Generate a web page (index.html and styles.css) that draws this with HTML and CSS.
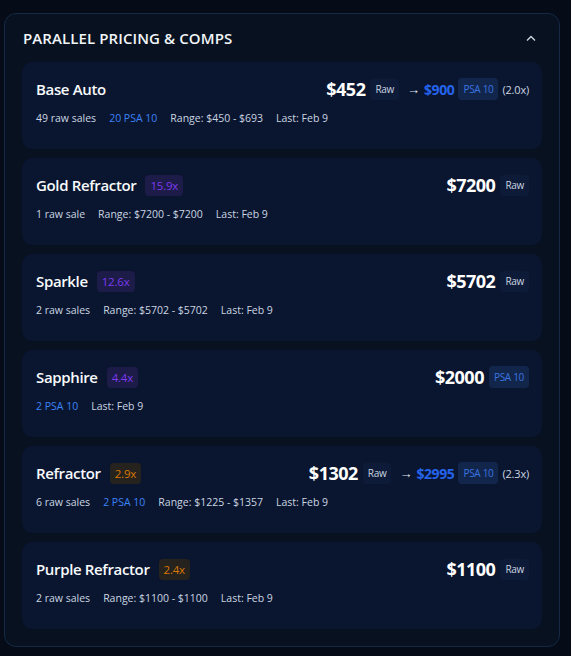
FILE: index.html
```html
<!DOCTYPE html>
<html lang="en">
<head>
  <meta charset="UTF-8" />
  <meta name="viewport" content="width=device-width, initial-scale=1.0"/>
  <title>Parallel Pricing &amp; Comps</title>
  <link rel="stylesheet" href="styles.css">
</head>
<body>

<section class="panel">
  <div class="panel-head">
    <h2>PARALLEL PRICING &amp; COMPS</h2>
    <svg class="chevron" width="10" height="6" viewBox="0 0 10 6">
      <polyline points="1,5.5 5,1.5 9,5.5" fill="none" stroke="#cbd5e1" stroke-width="1.4"/>
    </svg>
  </div>

  <div class="cards">
    <div class="card">
      <div class="top">
        <div class="name">Base Auto</div>
        <div class="prices">
          <span class="price">$452</span>
          <span class="tag raw">Raw</span>
          <span class="arrow">&rarr;</span>
          <span class="psa-price">$900</span>
          <span class="tag psa">PSA 10</span>
          <span class="ratio">(2.0x)</span>
        </div>
      </div>
      <div class="meta">
        <span>49 raw sales</span>
        <span class="blue">20 PSA 10</span>
        <span>Range: $450 - $693</span>
        <span>Last: Feb 9</span>
      </div>
    </div>

    <div class="card">
      <div class="top">
        <div class="name">Gold Refractor <span class="mult purple">15.9x</span></div>
        <div class="prices">
          <span class="price">$7200</span>
          <span class="tag raw">Raw</span>
        </div>
      </div>
      <div class="meta">
        <span>1 raw sale</span>
        <span>Range: $7200 - $7200</span>
        <span>Last: Feb 9</span>
      </div>
    </div>

    <div class="card">
      <div class="top">
        <div class="name">Sparkle <span class="mult purple">12.6x</span></div>
        <div class="prices">
          <span class="price">$5702</span>
          <span class="tag raw">Raw</span>
        </div>
      </div>
      <div class="meta">
        <span>2 raw sales</span>
        <span>Range: $5702 - $5702</span>
        <span>Last: Feb 9</span>
      </div>
    </div>

    <div class="card">
      <div class="top">
        <div class="name">Sapphire <span class="mult purple">4.4x</span></div>
        <div class="prices">
          <span class="price">$2000</span>
          <span class="tag psa">PSA 10</span>
        </div>
      </div>
      <div class="meta">
        <span class="blue">2 PSA 10</span>
        <span>Last: Feb 9</span>
      </div>
    </div>

    <div class="card">
      <div class="top">
        <div class="name">Refractor <span class="mult orange">2.9x</span></div>
        <div class="prices">
          <span class="price">$1302</span>
          <span class="tag raw">Raw</span>
          <span class="arrow">&rarr;</span>
          <span class="psa-price">$2995</span>
          <span class="tag psa">PSA 10</span>
          <span class="ratio">(2.3x)</span>
        </div>
      </div>
      <div class="meta">
        <span>6 raw sales</span>
        <span class="blue">2 PSA 10</span>
        <span>Range: $1225 - $1357</span>
        <span>Last: Feb 9</span>
      </div>
    </div>

    <div class="card">
      <div class="top">
        <div class="name">Purple Refractor <span class="mult orange">2.4x</span></div>
        <div class="prices">
          <span class="price">$1100</span>
          <span class="tag raw">Raw</span>
        </div>
      </div>
      <div class="meta">
        <span>2 raw sales</span>
        <span>Range: $1100 - $1100</span>
        <span>Last: Feb 9</span>
      </div>
    </div>
  </div>
</section>

</body>
</html>
```

FILE: styles.css
```css
body {
  margin: 0;
  padding: 13px 11px 11px 4px;
  font-family: 'Open Sans', 'Noto Sans', sans-serif;
  background: #050b17;
  color: #e2e8f0;
}

.panel {
  background: #07111f;
  border: 1px solid #152845;
  border-radius: 12px;
  padding: 0 17px 17px;
}

.panel-head {
  display: flex;
  justify-content: space-between;
  align-items: center;
  height: 48px;
  padding: 0 1px;
}

.panel-head h2 {
  margin: 0;
  font-size: 15px;
  font-weight: 600;
  color: #f1f5f9;
  letter-spacing: 0.1px;
}

.chevron {
  margin-right: 5px;
}

.cards {
  display: flex;
  flex-direction: column;
  gap: 9px;
}

.card {
  background: #0a1630;
  border-radius: 10px;
  padding: 16px 13px 23px 14px;
  height: 87px;
  box-sizing: border-box;
}

.top {
  display: flex;
  justify-content: space-between;
  align-items: center;
  height: 22px;
}

.name {
  display: flex;
  align-items: center;
  gap: 9px;
  font-size: 15px;
  font-weight: 600;
  letter-spacing: -0.35px;
  color: #f8fafc;
}

.mult {
  font-size: 11.5px;
  font-weight: 500;
  letter-spacing: -0.2px;
  padding: 2px 5px;
  border-radius: 4px;
  line-height: 17px;
}

.purple {
  color: #7c3aed;
  background: #1d1b48;
}

.orange {
  color: #d97706;
  background: #26231f;
}

.prices {
  display: flex;
  align-items: center;
}

.price {
  font-size: 18px;
  font-weight: 700;
  letter-spacing: -0.5px;
  color: #ffffff;
  margin-right: 5px;
}

.tag {
  font-size: 10px;
  letter-spacing: -0.3px;
  padding: 0 5px;
  line-height: 21px;
  border-radius: 4px;
}

.tag.raw {
  color: #cbd5e1;
  background: #0e1b38;
}

.tag.psa {
  color: #3b74e0;
  background: #12264b;
  line-height: 22px;
}

.arrow {
  font-size: 13px;
  line-height: 16px;
  color: #e2e8f0;
  margin: 0 4px 0 8px;
}

.psa-price {
  font-size: 14px;
  font-weight: 700;
  letter-spacing: -0.4px;
  color: #2563eb;
  margin-right: 4px;
}

.ratio {
  font-size: 11px;
  letter-spacing: -0.2px;
  color: #cbd5e1;
  margin-left: 4px;
}

.meta {
  display: flex;
  gap: 13px;
  margin-top: 10px;
  font-size: 10.5px;
  line-height: 16px;
  color: #cbd5e1;
}

.meta .blue {
  color: #3b82f6;
}
```
